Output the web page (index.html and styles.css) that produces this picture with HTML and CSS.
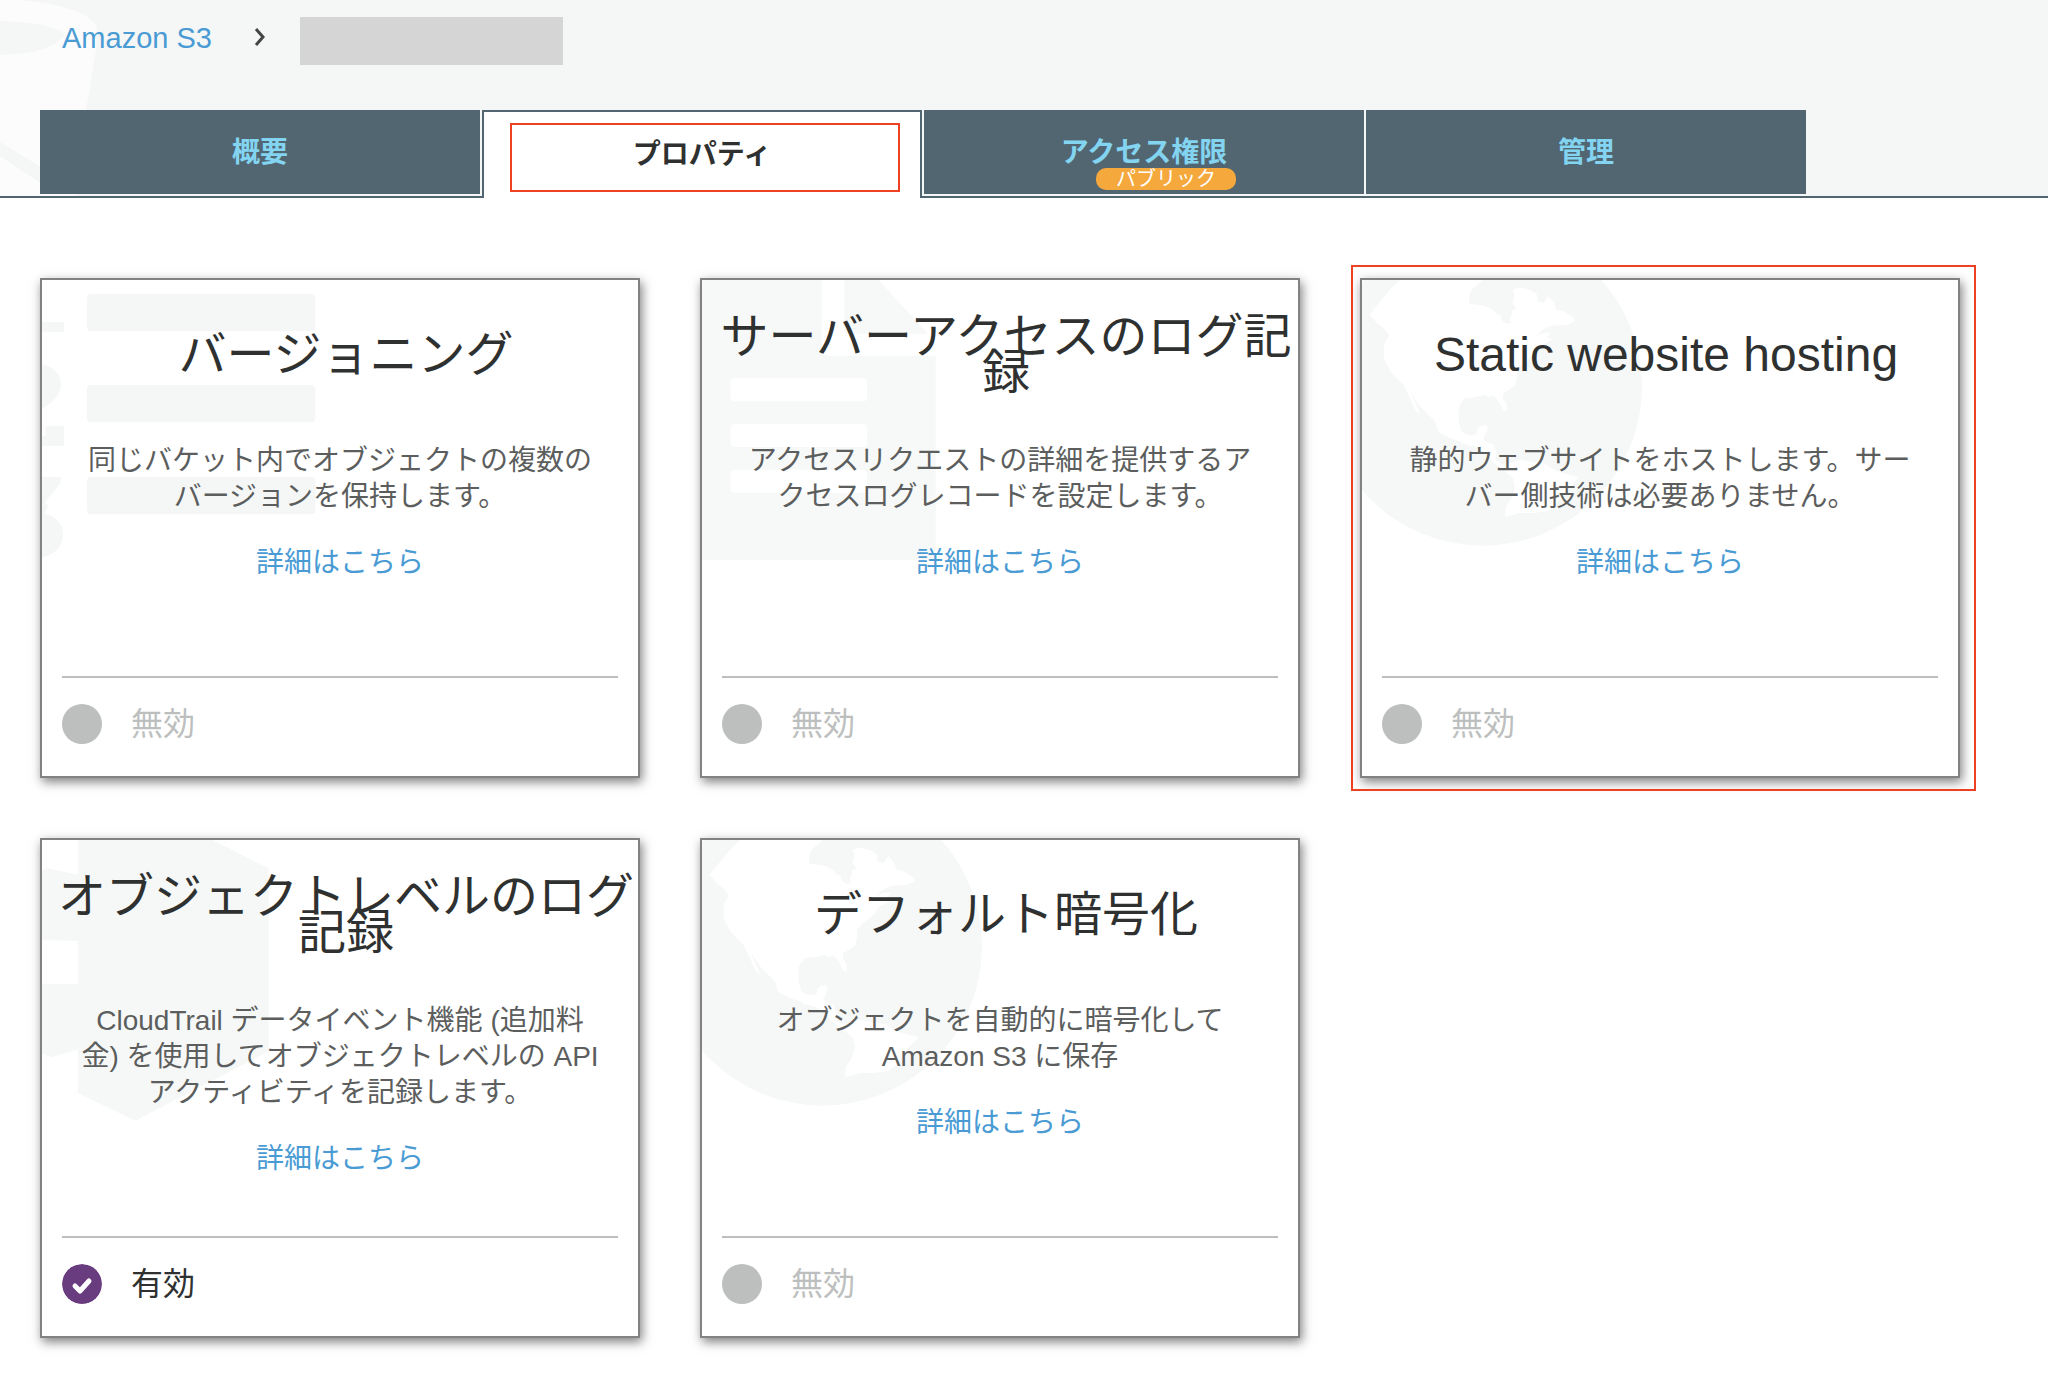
FILE: index.html
```
<!DOCTYPE html>
<html lang="ja">
<head>
<meta charset="utf-8">
<meta name="viewport" content="width=device-width, initial-scale=1">
<title>Amazon S3</title>
<link rel="stylesheet" href="styles.css">
</head>
<body>
<svg class="defs" aria-hidden="true">
  <symbol id="globe" viewBox="6 6 894 894">
    <circle cx="368" cy="325" r="478" fill="#f6f8f7"/>
    <path fill="#fff" d="M28 110 L45 90 70 60 95 30 120 6 H368 L335 35 Q322 55 330 78 L365 82 Q400 90 408 108 L420 112 Q430 145 452 135 L450 118 458 110 455 98 470 90 457 75 464 55 458 35 Q490 20 530 48 L533 72 550 75 565 55 580 70 590 95 610 100 640 118 645 130 620 140 600 142 Q550 142 528 176 Q550 160 572 164 L560 180 578 184 Q560 195 540 205 L520 230 490 255 470 275 472 290 465 325 430 345 428 360 440 380 441 400 430 398 415 368 400 352 385 357 375 350 345 358 315 360 297 385 Q291 430 305 460 Q325 478 350 468 Q350 442 375 442 L385 450 375 470 370 485 385 495 400 500 410 525 405 545 430 560 455 555 480 545 560 560 590 580 655 598 635 620 610 645 Q590 690 560 700 L520 705 480 705 435 717 437 690 455 660 465 630 460 600 430 575 395 550 380 530 350 508 310 497 300 490 270 480 235 462 225 430 200 405 180 385 150 340 175 395 180 412 165 395 150 360 130 320 100 290 Q65 250 72 210 L75 190 88 175 75 155 50 135 45 128Z"/>
  </symbol>
</svg>

<header class="header">
  <svg class="header-art" viewBox="0 0 100 196" aria-hidden="true">
    <path fill="#fcfcfc" fill-rule="evenodd" d="M0 0 H18 Q88 6 97 28 L96 50 86 110 75 196 H0Z M0 21 Q50 22 65 34 Q52 54 0 55Z"/>
    <path fill="#f5f7f6" d="M0 142 L46 170 V187 L0 156Z"/>
  </svg>
  <nav class="breadcrumb" aria-label="breadcrumb">
    <a href="#">Amazon S3</a>
    <svg class="chevron" viewBox="0 0 12 20" aria-hidden="true"><path d="M2 2 L9 10 L2 18" fill="none" stroke="#444" stroke-width="3"/></svg>
    <span class="bucket-name"></span>
  </nav>
  <div class="tabs" role="tablist">
    <button class="tab" type="button" role="tab" aria-selected="false">概要</button>
    <button class="tab tab-active" type="button" role="tab" aria-selected="true">プロパティ<span class="tab-mark"></span></button>
    <button class="tab" type="button" role="tab" aria-selected="false">アクセス権限<span class="badge">パブリック</span></button>
    <button class="tab" type="button" role="tab" aria-selected="false">管理</button>
  </div>
</header>

<main class="cards">
  <section class="card">
    <svg class="card-art" viewBox="6 6 894 894" aria-hidden="true">
      <g fill="#f5f7f6">
        <rect x="141" y="48" width="685" height="112" rx="12"/>
        <rect x="141" y="321" width="685" height="112" rx="12"/>
        <rect x="141" y="597" width="685" height="112" rx="12"/>
        <path d="M6 132 H72 V161 H6Z M6 259 Q63 273 63 322 Q60 362 6 393Z M16 443 H72 V504 H6 V474 H16Z M6 597 H62 V615 L14 673 25 684 13 706 Q69 722 69 770 Q66 822 6 839Z"/>
      </g>
    </svg>
    <h2 class="card-title">バージョニング</h2>
    <div class="card-body">
      <p>同じバケット内でオブジェクトの複数のバージョンを保持します。</p>
      <a href="#">詳細はこちら</a>
    </div>
    <div class="status"><span class="dot"></span>無効</div>
  </section>

  <section class="card">
    <svg class="card-art" viewBox="6 6 894 894" aria-hidden="true">
      <path fill="#f7f9f8" d="M6 6 H365 V213 Q365 233 385 233 H707 V846 H6Z M433 6 H536 L684 167 H443 Q433 167 433 157Z"/>
      <g fill="#fff">
        <rect x="92" y="301" width="409" height="69" rx="12"/>
        <rect x="92" y="438" width="409" height="69" rx="12"/>
        <rect x="92" y="575" width="409" height="69" rx="12"/>
      </g>
    </svg>
    <h2 class="card-title">サーバーアクセスのログ記録</h2>
    <div class="card-body">
      <p>アクセスリクエストの詳細を提供するアクセスログレコードを設定します。</p>
      <a href="#">詳細はこちら</a>
    </div>
    <div class="status"><span class="dot"></span>無効</div>
  </section>

  <section class="card card-marked">
    <svg class="card-art" aria-hidden="true"><use href="#globe"/></svg>
    <h2 class="card-title">Static website hosting</h2>
    <div class="card-body">
      <p>静的ウェブサイトをホストします。サーバー側技術は必要ありません。</p>
      <a href="#">詳細はこちら</a>
    </div>
    <div class="status"><span class="dot"></span>無効</div>
  </section>

  <section class="card">
    <svg class="card-art" viewBox="6 6 894 894" aria-hidden="true">
      <path fill="#f6f8f7" d="M113 6 H518 L686 91 V640 L286 848 113 765Z M6 98 L24 91 113 110 V309 L6 306Z M6 438 H113 V635 L33 658 6 645Z"/>
    </svg>
    <h2 class="card-title">オブジェクトレベルのログ記録</h2>
    <div class="card-body">
      <p>CloudTrail データイベント機能 (追加料金) を使用してオブジェクトレベルの API アクティビティを記録します。</p>
      <a href="#">詳細はこちら</a>
    </div>
    <div class="status status-on">
      <svg class="dot-on" viewBox="0 0 40 40" aria-hidden="true"><circle cx="20" cy="20" r="20" fill="#693b7f"/><path d="M13 22 L18 27 L27 17" fill="none" stroke="#fff" stroke-width="5" stroke-linecap="round" stroke-linejoin="round"/></svg>有効
    </div>
  </section>

  <section class="card">
    <svg class="card-art" aria-hidden="true"><use href="#globe"/></svg>
    <h2 class="card-title">デフォルト暗号化</h2>
    <div class="card-body">
      <p>オブジェクトを自動的に暗号化して Amazon S3 に保存</p>
      <a href="#">詳細はこちら</a>
    </div>
    <div class="status"><span class="dot"></span>無効</div>
  </section>
</main>
</body>
</html>
```

FILE: styles.css
```
* {
  box-sizing: border-box;
}

body {
  margin: 0;
  background: #fff;
  color: #2f3131;
  font-family: "Liberation Sans", "Noto Sans CJK JP", sans-serif;
  font-size: 28px;
  line-height: 36px;
}

a {
  color: #4a9bd4;
  text-decoration: none;
}

.defs {
  position: absolute;
  width: 0;
  height: 0;
}

/* Header */
.header {
  position: relative;
  background: #f5f7f6;
  border-bottom: 2px solid #526672;
}

.header-art {
  position: absolute;
  left: 0;
  top: 0;
  width: 100px;
  height: 196px;
}

.breadcrumb {
  position: relative;
  display: flex;
  align-items: flex-start;
  height: 110px;
  padding: 17px 62px 0;
  font-size: 29px;
}

.breadcrumb a {
  line-height: 42px;
}

.chevron {
  width: 12px;
  height: 20px;
  margin: 10px 34px 0 42px;
}

.bucket-name {
  width: 263px;
  height: 48px;
  background: #d5d5d5;
}

.tabs {
  position: relative;
  display: flex;
  gap: 2px;
  padding: 0 40px;
}

.tab {
  position: relative;
  flex: 0 1 440px;
  height: 84px;
  margin: 0 0 2px;
  padding: 2px 0 0;
  border: 0;
  background: #526672;
  color: #83d4f0;
  font: inherit;
  font-weight: bold;
}

.tab-active {
  height: 88px;
  margin-bottom: -2px;
  padding: 0;
  border: 2px solid #526672;
  border-bottom: 0;
  background: #fff;
  color: #2f3131;
}

.tab-mark {
  position: absolute;
  inset: 11px 20px 6px 26px;
  border: 2px solid #ee4023;
}

.badge {
  position: absolute;
  left: 172px;
  top: 58px;
  width: 140px;
  border-radius: 10px;
  background: #f5a83c;
  color: #fff;
  font-size: 20px;
  font-weight: normal;
  line-height: 22px;
}

/* Property cards */
.cards {
  display: grid;
  grid-template-columns: repeat(auto-fill, 600px);
  gap: 60px;
  padding: 80px 40px 42px;
}

.card {
  position: relative;
  display: flex;
  flex-direction: column;
  min-height: 500px;
  border: 2px solid #828282;
  background: #fff;
  box-shadow: 2px 4px 10px rgba(0, 0, 0, 0.5);
}

.card-marked::after {
  content: "";
  position: absolute;
  inset: -15px -18px -15px -11px;
  border: 2px solid #ee4023;
  pointer-events: none;
}

.card-art {
  position: absolute;
  left: 0;
  top: 0;
  width: 298px;
  height: 298px;
}

.card-title {
  position: relative;
  display: flex;
  align-items: center;
  justify-content: center;
  min-height: 150px;
  margin: 0 0 0 12px;
  font-size: 48px;
  font-weight: normal;
  line-height: 36px;
  text-align: center;
}

.card-body {
  position: relative;
  padding: 13px 36px 20px;
  color: #5c5e5e;
  text-align: center;
}

.card-body p {
  margin: 0 0 30px;
}

.status {
  display: flex;
  align-items: center;
  gap: 29px;
  height: 100px;
  margin: auto 20px 0;
  padding-bottom: 6px;
  border-top: 2px solid #bdbfbe;
  color: #bdbfbe;
  font-size: 32px;
}

.status-on {
  color: #2f3131;
}

.dot,
.dot-on {
  width: 40px;
  height: 40px;
  border-radius: 50%;
}

.dot {
  background: #bdbfbe;
}
```
